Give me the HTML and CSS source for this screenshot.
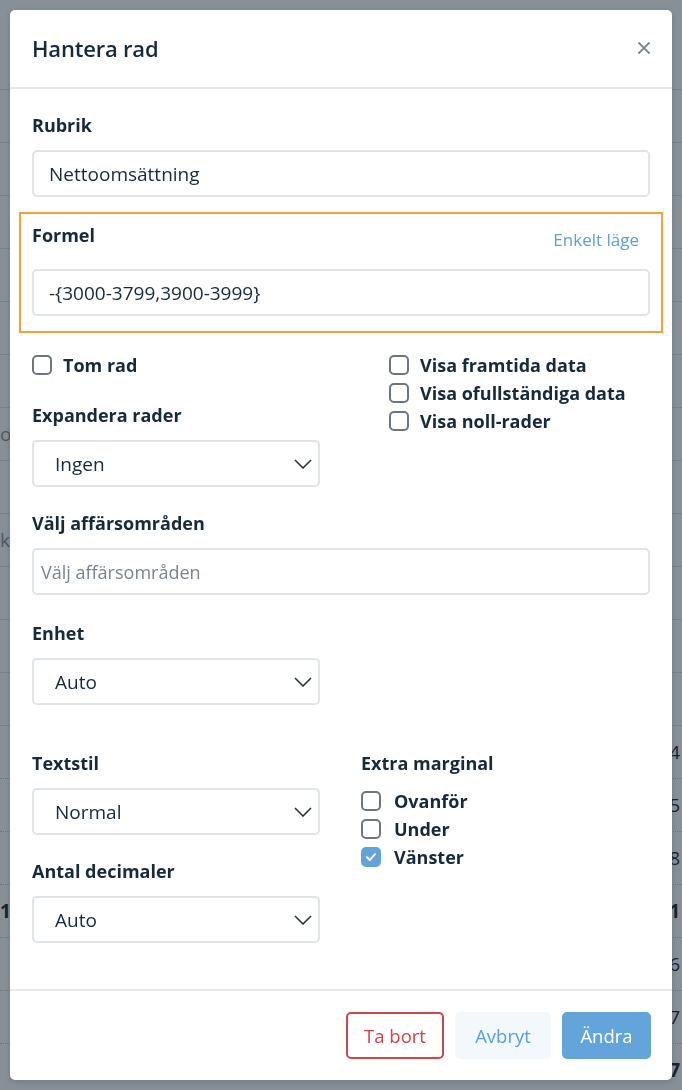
FILE: index.html
```html
<!DOCTYPE html>
<html lang="sv">
<head>
<meta charset="utf-8">
<title>Hantera rad</title>
<link rel="stylesheet" href="styles.css">
</head>
<body>
<div class="page">
  <div class="page-row"><span class="l"></span><span class="r"></span></div>
  <div class="page-row"><span class="l"></span><span class="r"></span></div>
  <div class="page-row"><span class="l"></span><span class="r"></span></div>
  <div class="page-row"><span class="l"></span><span class="r"></span></div>
  <div class="page-row"><span class="l"></span><span class="r"></span></div>
  <div class="page-row"><span class="l"></span><span class="r"></span></div>
  <div class="page-row"><span class="l"></span><span class="r"></span></div>
  <div class="page-row"><span class="l muted">o</span><span class="r"></span></div>
  <div class="page-row"><span class="l"></span><span class="r"></span></div>
  <div class="page-row"><span class="l muted">ke</span><span class="r"></span></div>
  <div class="page-row"><span class="l"></span><span class="r"></span></div>
  <div class="page-row"><span class="l"></span><span class="r"></span></div>
  <div class="page-row"><span class="l"></span><span class="r"></span></div>
  <div class="page-row dotted"><span class="l"></span><span class="r">1 234</span></div>
  <div class="page-row dotted"><span class="l"></span><span class="r">2 345</span></div>
  <div class="page-row dotted"><span class="l"></span><span class="r">3 678</span></div>
  <div class="page-row dotted bold"><span class="l">1</span><span class="r">4 561</span></div>
  <div class="page-row dotted"><span class="l"></span><span class="r">5 456</span></div>
  <div class="page-row dotted"><span class="l"></span><span class="r">6 567</span></div>
  <div class="page-row dotted bold"><span class="l"></span><span class="r">7 777</span></div>
</div>

<div class="overlay">
  <div class="modal">
    <div class="modal-header">
      <h2 class="modal-title">Hantera rad</h2>
      <span class="close" aria-label="Stäng">
        <svg width="12" height="12" viewBox="0 0 12 12"><path d="M1 1 L11 11 M11 1 L1 11" stroke="#7d8791" stroke-width="1.8" stroke-linecap="round" fill="none"/></svg>
      </span>
    </div>

    <div class="modal-body">
      <div class="group">
        <div class="label">Rubrik</div>
        <div class="input">Nettoomsättning</div>
      </div>

      <div class="group highlight">
        <div class="label-row">
          <div class="label">Formel</div>
          <span class="link">Enkelt läge</span>
        </div>
        <div class="input">-{3000-3799,3900-3999}</div>
      </div>

      <div class="two-col top-cols">
        <div class="col">
          <div class="check-list">
            <div class="check"><span class="box"></span><span>Tom rad</span></div>
          </div>
          <div class="group expand-group">
            <div class="label">Expandera rader</div>
            <div class="select"><span>Ingen</span><svg class="chev" width="18" height="10" viewBox="0 0 18 10"><path d="M1 1 L9 9 L17 1" stroke="#27333f" stroke-width="1.6" fill="none"/></svg></div>
          </div>
        </div>
        <div class="col right-indent">
          <div class="check-list">
            <div class="check"><span class="box"></span><span>Visa framtida data</span></div>
            <div class="check"><span class="box"></span><span>Visa ofullständiga data</span></div>
            <div class="check"><span class="box"></span><span>Visa noll-rader</span></div>
          </div>
        </div>
      </div>

      <div class="group areas-group">
        <div class="label">Välj affärsområden</div>
        <div class="input placeholder">Välj affärsområden</div>
      </div>

      <div class="two-col">
        <div class="col">
          <div class="group">
            <div class="label">Enhet</div>
            <div class="select"><span>Auto</span><svg class="chev" width="18" height="10" viewBox="0 0 18 10"><path d="M1 1 L9 9 L17 1" stroke="#27333f" stroke-width="1.6" fill="none"/></svg></div>
          </div>
        </div>
        <div class="col"></div>
      </div>

      <div class="two-col style-cols">
        <div class="col">
          <div class="group">
            <div class="label">Textstil</div>
            <div class="select"><span>Normal</span><svg class="chev" width="18" height="10" viewBox="0 0 18 10"><path d="M1 1 L9 9 L17 1" stroke="#27333f" stroke-width="1.6" fill="none"/></svg></div>
          </div>
          <div class="group last">
            <div class="label">Antal decimaler</div>
            <div class="select"><span>Auto</span><svg class="chev" width="18" height="10" viewBox="0 0 18 10"><path d="M1 1 L9 9 L17 1" stroke="#27333f" stroke-width="1.6" fill="none"/></svg></div>
          </div>
        </div>
        <div class="col">
          <div class="label">Extra marginal</div>
          <div class="check-list margin-list">
            <div class="check"><span class="box"></span><span>Ovanför</span></div>
            <div class="check"><span class="box"></span><span>Under</span></div>
            <div class="check"><span class="box checked"><svg width="12" height="10" viewBox="0 0 12 10"><path d="M2 5.2 L4.8 8 L10 2.2" stroke="#fff" stroke-width="2" fill="none" stroke-linecap="round" stroke-linejoin="round"/></svg></span><span>Vänster</span></div>
          </div>
        </div>
      </div>
    </div>

    <div class="modal-footer">
      <button class="btn btn-danger">Ta bort</button>
      <button class="btn btn-light">Avbryt</button>
      <button class="btn btn-primary">Ändra</button>
    </div>
  </div>
</div>
</body>
</html>
```

FILE: styles.css
```css
* { box-sizing: border-box; }

html, body {
  margin: 0;
  padding: 0;
}

body {
  width: 682px;
  height: 1090px;
  overflow: hidden;
  font-family: "Open Sans", "Liberation Sans", sans-serif;
  color: #192b3c;
  background: #ffffff;
}

/* background page (under the backdrop) */
.page {
  display: flex;
  flex-direction: column;
  padding-top: 37px;
}

.page-row {
  height: 53px;
  flex: none;
  display: flex;
  justify-content: space-between;
  align-items: center;
  border-bottom: 1px solid #dfe3e7;
  font-size: 19px;
  color: #1e2a36;
  padding: 0 2px 0 0;
}

.page-row.dotted {
  border-bottom: 1px dotted #c8cdd2;
}

.page-row.bold { font-weight: 700; }

.page-row .muted { color: #8a939c; }

/* backdrop */
.overlay {
  position: fixed;
  inset: 0;
  background: rgba(15, 31, 47, 0.5);
  padding: 10px;
  display: flex;
}

.modal {
  width: 662px;
  height: 1070px;
  background: #ffffff;
  border-radius: 5px;
  display: flex;
  flex-direction: column;
  box-shadow: 0 2px 6px rgba(0, 0, 0, 0.15);
}

.modal-header {
  height: 79px;
  flex: none;
  display: flex;
  align-items: center;
  justify-content: space-between;
  padding: 0 21px 2px 22px;
  border-bottom: 2px solid #e3e8ec;
}

.modal-title {
  margin: 0;
  font-size: 22px;
  font-weight: 600;
  color: #172a3b;
  letter-spacing: -0.2px;
}

.close {
  display: flex;
  width: 14px;
  height: 14px;
  align-items: center;
  justify-content: center;
}

.modal-body {
  flex: 1;
  padding: 25px 22px 0 22px;
}

.group {
  margin-bottom: 25px;
}

.label {
  font-size: 18px;
  font-weight: 700;
  line-height: 22px;
  height: 22px;
  margin-bottom: 14px;
  color: #172a3b;
}

.input, .select {
  height: 47px;
  border: 2px solid #dfe4e8;
  border-radius: 5px;
  display: flex;
  align-items: center;
  font-size: 19px;
  color: #172a3b;
  padding-left: 15px;
  white-space: nowrap;
}

.input.placeholder {
  padding-left: 7px;
  color: #7b848e;
  font-size: 18px;
}

.select {
  justify-content: space-between;
  padding-left: 21px;
  padding-right: 6px;
}

.chev { display: block; }

/* highlighted formula box */
.group.highlight {
  margin: -10px -13px 18px;
  border: 2px solid #f3a13b;
  padding: 10px 11px 15px;
}

.label-row {
  height: 32px;
  display: flex;
  justify-content: space-between;
  margin-bottom: 13px;
}

.label-row .label {
  margin-bottom: 0;
}

.link {
  align-self: center;
  font-size: 17px;
  line-height: 22px;
  color: #5c9fd8;
  padding-right: 11px;
}

/* two columns */
.two-col {
  display: grid;
  grid-template-columns: 288px 1fr;
  column-gap: 41px;
}

.right-indent {
  padding-left: 28px;
}

.check-list {
  display: flex;
  flex-direction: column;
}

.check {
  height: 28px;
  display: flex;
  align-items: center;
  gap: 11px;
  font-size: 18px;
  font-weight: 700;
  color: #172a3b;
  white-space: nowrap;
}

.box {
  width: 20px;
  height: 20px;
  flex: none;
  border: 2px solid #6c7682;
  border-radius: 5px;
  display: flex;
  align-items: center;
  justify-content: center;
}

.box.checked {
  background: #62a4da;
  border-color: #62a4da;
}

.expand-group {
  margin-top: 25px;
}

.areas-group {
  margin-bottom: 27px;
}

.style-cols {
  margin-top: 22px;
}

.style-cols .col > .label {
  margin-bottom: 13px;
}

.style-cols .check {
  gap: 13px;
}

.group.last { margin-bottom: 0; }

/* footer */
.modal-footer {
  flex: none;
  height: 91px;
  border-top: 2px solid #e3e8ec;
  display: flex;
  justify-content: flex-end;
  align-items: center;
  gap: 11px;
  padding: 0 21px 0 22px;
}

.btn {
  height: 47px;
  font-family: "Open Sans", "Liberation Sans", sans-serif;
  font-size: 18.5px;
  border-radius: 5px;
  border: 2px solid transparent;
  padding: 0;
  white-space: nowrap;
  cursor: pointer;
}

.btn-danger {
  background: #ffffff;
  border-color: #d3444c;
  color: #d2424a;
  width: 98px;
}

.btn-light {
  background: #f3f8fc;
  border-color: #f3f8fc;
  color: #5c9fd8;
  width: 96px;
}

.btn-primary {
  background: #63a5da;
  border-color: #63a5da;
  color: #ffffff;
  width: 89px;
}
```
